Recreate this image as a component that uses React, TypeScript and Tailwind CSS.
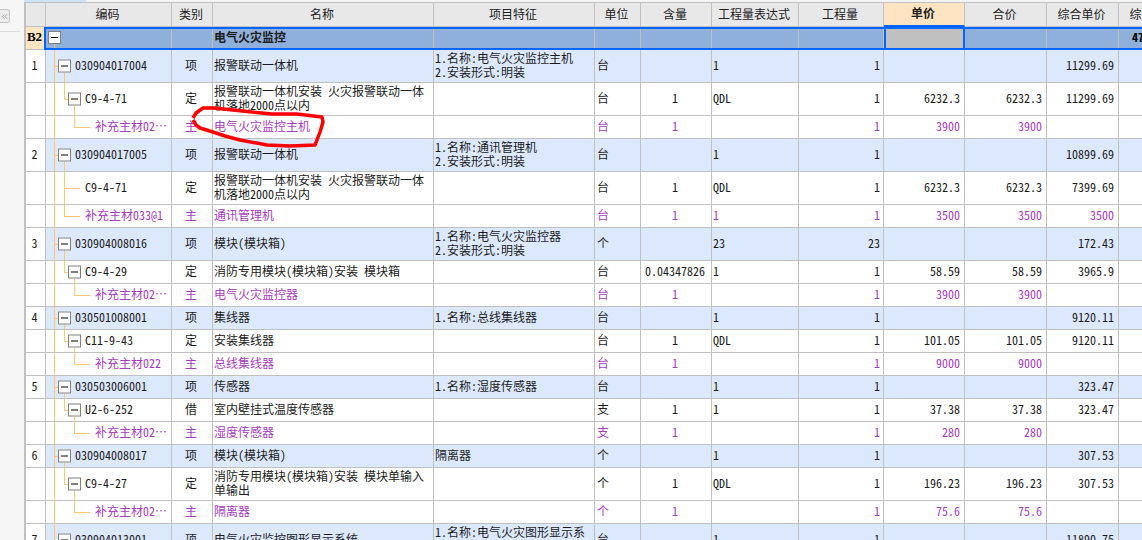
import { ChevronsLeft } from 'lucide-react'

const COLS = 'grid-cols-[22px_126px_41px_221px_161px_46px_71px_87px_85px_81px_82px_72px_72px]'

type Level = 1 | 2 | 3

interface Row {
  no?: string
  code: string
  level: Level
  box?: boolean
  stem?: boolean
  kind: string
  name: string
  feature?: string[]
  unit: string
  qty?: string
  expr?: string
  amount: string
  price?: string
  total?: string
  rate?: string
  tall?: boolean
}

const rows: Row[] = [
  { no: '1', code: '030904017004', level: 1, box: true, kind: '项', name: '报警联动一体机', feature: ['1.名称:电气火灾监控主机', '2.安装形式:明装'], unit: '台', expr: '1', amount: '1', rate: '11299.69', tall: true },
  { code: 'C9-4-71', level: 2, box: true, kind: '定', name: '报警联动一体机安装 火灾报警联动一体机落地2000点以内', unit: '台', qty: '1', expr: 'QDL', amount: '1', price: '6232.3', total: '6232.3', rate: '11299.69', tall: true },
  { code: '补充主材02…', level: 3, kind: '主', name: '电气火灾监控主机', unit: '台', qty: '1', amount: '1', price: '3900', total: '3900' },
  { no: '2', code: '030904017005', level: 1, box: true, kind: '项', name: '报警联动一体机', feature: ['1.名称:通讯管理机', '2.安装形式:明装'], unit: '台', expr: '1', amount: '1', rate: '10899.69', tall: true },
  { code: 'C9-4-71', level: 2, stem: true, kind: '定', name: '报警联动一体机安装 火灾报警联动一体机落地2000点以内', unit: '台', qty: '1', expr: 'QDL', amount: '1', price: '6232.3', total: '6232.3', rate: '7399.69', tall: true },
  { code: '补充主材033@1', level: 2, kind: '主', name: '通讯管理机', unit: '台', qty: '1', expr: '1', amount: '1', price: '3500', total: '3500', rate: '3500' },
  { no: '3', code: '030904008016', level: 1, box: true, kind: '项', name: '模块(模块箱)', feature: ['1.名称:电气火灾监控器', '2.安装形式:明装'], unit: '个', expr: '23', amount: '23', rate: '172.43', tall: true },
  { code: 'C9-4-29', level: 2, box: true, kind: '定', name: '消防专用模块(模块箱)安装 模块箱', unit: '台', qty: '0.04347826', expr: '1', amount: '1', price: '58.59', total: '58.59', rate: '3965.9' },
  { code: '补充主材02…', level: 3, kind: '主', name: '电气火灾监控器', unit: '台', qty: '1', amount: '1', price: '3900', total: '3900' },
  { no: '4', code: '030501008001', level: 1, box: true, kind: '项', name: '集线器', feature: ['1.名称:总线集线器'], unit: '台', expr: '1', amount: '1', rate: '9120.11' },
  { code: 'C11-9-43', level: 2, box: true, kind: '定', name: '安装集线器', unit: '台', qty: '1', expr: 'QDL', amount: '1', price: '101.05', total: '101.05', rate: '9120.11' },
  { code: '补充主材022', level: 3, kind: '主', name: '总线集线器', unit: '台', qty: '1', amount: '1', price: '9000', total: '9000' },
  { no: '5', code: '030503006001', level: 1, box: true, kind: '项', name: '传感器', feature: ['1.名称:湿度传感器'], unit: '台', expr: '1', amount: '1', rate: '323.47' },
  { code: 'U2-6-252', level: 2, box: true, kind: '借', name: '室内壁挂式温度传感器', unit: '支', qty: '1', expr: '1', amount: '1', price: '37.38', total: '37.38', rate: '323.47' },
  { code: '补充主材02…', level: 3, kind: '主', name: '湿度传感器', unit: '支', qty: '1', amount: '1', price: '280', total: '280' },
  { no: '6', code: '030904008017', level: 1, box: true, kind: '项', name: '模块(模块箱)', feature: ['隔离器'], unit: '个', expr: '1', amount: '1', rate: '307.53' },
  { code: 'C9-4-27', level: 2, box: true, kind: '定', name: '消防专用模块(模块箱)安装 模块单输入单输出', unit: '个', qty: '1', expr: 'QDL', amount: '1', price: '196.23', total: '196.23', rate: '307.53', tall: true },
  { code: '补充主材02…', level: 3, kind: '主', name: '隔离器', unit: '个', qty: '1', amount: '1', price: '75.6', total: '75.6' },
  { no: '7', code: '030904013001', level: 1, box: true, kind: '项', name: '电气火灾监控图形显示系统', feature: ['1.名称:电气火灾图形显示系统'], unit: '台', expr: '1', amount: '1', rate: '11890.75', tall: true },
]

const headers = ['', '编码', '类别', '名称', '项目特征', '单位', '含量', '工程量表达式', '工程量', '单价', '合价', '综合单价', '综合合价']

const cell = 'border-r border-b border-[#c0c0c0] flex items-center min-w-0 overflow-hidden pb-[2px]'

function Box({ className }: { className: string }) {
  return (
    <span className={`absolute w-[13px] h-[13px] bg-white border border-[#808080] flex items-center justify-center ${className}`}>
      <span className="w-[7px] h-px bg-black" />
    </span>
  )
}

function Tree({ row }: { row: Row }) {
  const line = 'absolute bg-[#ffc670]'
  return (
    <>
      <span className={`${line} left-[8px] top-0 bottom-[-1px] w-px`} />
      {row.level === 1 && <span className={`${line} left-[8px] top-1/2 w-[6px] h-px`} />}
      {row.level === 1 && <span className={`${line} left-[18px] top-1/2 bottom-[-1px] w-px`} />}
      {row.level === 2 && <span className={`${line} left-[18px] top-0 w-px ${row.stem ? 'bottom-[-1px]' : 'h-1/2'}`} />}
      {row.level === 2 && <span className={`${line} left-[18px] top-1/2 h-px ${row.box ? 'w-[6px]' : 'w-[16px]'}`} />}
      {row.level === 2 && row.box && <span className={`${line} left-[28px] top-1/2 bottom-[-1px] w-px`} />}
      {row.level === 3 && <span className={`${line} left-[28px] top-0 h-1/2 w-px`} />}
      {row.level === 3 && <span className={`${line} left-[28px] top-1/2 w-[16px] h-px`} />}
      {row.box && (
        <Box className={row.level === 1 ? 'left-[12px] top-1/2 -translate-y-1/2' : 'left-[22px] top-1/2 -translate-y-1/2'} />
      )}
    </>
  )
}

function DataRow({ row }: { row: Row }) {
  const main = row.kind === '主'
  const bg = row.level === 1 ? 'bg-[#dce9fc]' : 'bg-white'
  const text = main ? 'text-[#a63cbf]' : 'text-[#1c1c1c]'
  const indent = row.level === 1 ? 'pl-[29px]' : row.level === 2 ? 'pl-[39px]' : 'pl-[49px]'
  return (
    <div className={`grid ${COLS} ${row.tall ? 'h-[33px]' : 'h-[23px]'} ${text}`}>
      <div className={`${cell} justify-center pr-[2px] bg-white text-[#1c1c1c] border-l-2`}>{row.no}</div>
      <div className={`${cell} ${bg} ${indent} relative whitespace-nowrap`}>
        <Tree row={row} />
        {row.code}
      </div>
      <div className={`${cell} ${bg} justify-center pr-[2px]`}>{row.kind}</div>
      <div className={`${cell} ${bg} pl-[1px] pr-[3px] leading-[14px]`}>
        <span>{row.name}</span>
      </div>
      <div className={`${cell} ${bg} pl-[1px] leading-[14px]`}>
        <div>
          {row.feature?.map(line => <div key={line}>{line}</div>)}
        </div>
      </div>
      <div className={`${cell} ${bg} pl-[2px]`}>{row.unit}</div>
      <div className={`${cell} ${bg} justify-center pr-[2px]`}>{row.qty}</div>
      <div className={`${cell} ${bg} pl-[1px]`}>{row.expr}</div>
      <div className={`${cell} ${bg} justify-end pr-[3px]`}>{row.amount}</div>
      <div className={`${cell} ${bg} justify-end pr-[4px]`}>{row.price}</div>
      <div className={`${cell} ${bg} justify-end pr-[4px]`}>{row.total}</div>
      <div className={`${cell} ${bg} justify-end pr-[4px]`}>{row.rate}</div>
      <div className={`${cell} ${bg}`} />
    </div>
  )
}

export default function App() {
  return (
    <div className="relative flex h-[540px] w-[1142px] overflow-hidden bg-white text-[12px] font-['Noto_Sans_Mono_CJK_SC','Noto_Sans_CJK_SC',monospace]">
      <aside className="w-[24px] shrink-0 bg-[#f6f6f6] pt-[9px]">
        <button className="flex h-[14px] w-[10px] items-center justify-center rounded-r-[3px] border border-l-0 border-[#c4c4c4] bg-[#ececec] text-[#8a8a8a]">
          <ChevronsLeft size={9} />
        </button>
        <div className="mt-[8px] h-px w-[20px] bg-[#dddddd]" />
      </aside>

      <main className="min-w-0 flex-1 overflow-hidden">
        <div className="h-[2px] bg-[#f4f4f4]">
          <div className="h-[2px] w-[62px] bg-[#cfe3f5]" />
        </div>
        <div className={`grid ${COLS} h-[25px] text-[#222222]`}>
          {headers.map((h, i) => (
            <div
              key={i}
              className={`${cell} justify-center pr-[2px] whitespace-nowrap border-t ${i === 0 ? 'border-l-2' : ''} ${i === 9 ? 'bg-[#ffe4c4] font-bold !border-b-2 !border-b-[#0066ff]' : 'bg-[#e8e8e8]'}`}
            >
              {h}
            </div>
          ))}
        </div>

        <div className={`grid ${COLS} h-[23px] relative`}>
          <div className={`${cell} justify-center pr-[2px] border-l-2 bg-[#ffe4c4] font-bold font-['Liberation_Serif',serif] text-[13px]`}>B2</div>
          <div className={`${cell} bg-[#8fb0db] relative`}>
            <span className="absolute left-[8px] top-[14px] bottom-0 w-px bg-[#ffc670]" />
            <Box className="left-[2px] top-[4px]" />
          </div>
          <div className={`${cell} bg-[#8fb0db]`} />
          <div className={`${cell} bg-[#8fb0db] pl-[1px] font-bold text-[#1c1c1c]`}>电气火灾监控</div>
          <div className={`${cell} bg-[#8fb0db]`} />
          <div className={`${cell} bg-[#8fb0db]`} />
          <div className={`${cell} bg-[#8fb0db]`} />
          <div className={`${cell} bg-[#8fb0db]`} />
          <div className={`${cell} bg-[#8fb0db]`} />
          <div className={`${cell} bg-[#c0c0c0] !border-r-2 border-l-2 !border-[#0066ff]`} />
          <div className={`${cell} bg-[#8fb0db]`} />
          <div className={`${cell} bg-[#8fb0db]`} />
          <div className={`${cell} bg-[#8fb0db] justify-end pr-[10px] font-bold whitespace-nowrap`}>47562.17</div>
          <div className="pointer-events-none absolute left-[20px] right-0 top-0 bottom-0 border-2 border-r-0 border-[#0066ff]" />
        </div>

        {rows.map((row, i) => (
          <DataRow key={i} row={row} />
        ))}
      </main>

      <svg className="pointer-events-none absolute left-0 top-0" width="1142" height="540">
        <path
          d="M193 118 L196 113 L203 108 L214 108 L233 110 L252 112 L272 114 L297 114 L322 117 L323 122 L320 132 L317 140 L315 145 L290 146 L267 145 L240 140 L225 136 L213 132 L200 128 L196 125 L193 120"
          fill="none"
          stroke="#ff0000"
          strokeWidth="3.5"
          strokeLinejoin="round"
        />
      </svg>
    </div>
  )
}
